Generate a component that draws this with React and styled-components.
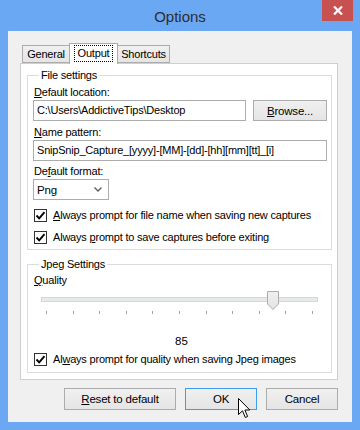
import React from 'react';
import styled, { createGlobalStyle } from 'styled-components';

const Global = createGlobalStyle`
  html, body { margin: 0; padding: 0; background: #6ba8f3; }
  body { font-family: "Liberation Sans", Arial, sans-serif; }
  * { box-sizing: border-box; }
`;

const Window = styled.div`
  position: relative;
  width: 360px;
  height: 430px;
  background: #6ba8f3;
  display: flex;
  flex-direction: column;
  padding: 0 8px 8px;
`;

const TitleBar = styled.div`
  height: 31px;
  margin: 0 -8px;
  display: grid;
  grid-template-columns: 1fr auto 1fr;
  align-items: start;
`;

const Title = styled.div`
  grid-column: 2;
  padding-top: 8px;
  font-size: 15px;
  line-height: 17px;
  color: #2d2d30;
`;

const CloseButton = styled.div`
  grid-column: 3;
  justify-self: end;
  margin-right: 7px;
  width: 31px;
  height: 21px;
  background: #c75050;
  display: flex;
  align-items: center;
  justify-content: center;
`;

const Client = styled.div`
  flex: 1;
  background: #f0f0f0;
  padding: 12px 14px 0 12px;
  display: flex;
  flex-direction: column;
`;

const TabStrip = styled.div`
  display: flex;
  align-items: flex-end;
  height: 20px;
  padding-left: 2px;
  position: relative;
  z-index: 1;
`;

const Tab = styled.div`
  width: ${p => p.$w}px;
  height: ${p => (p.$active ? 21 : 18)}px;
  margin: 0 ${p => (p.$active ? -1 : 0)}px ${p => (p.$active ? -1 : 0)}px;
  border: 1px solid #acacac;
  border-bottom: ${p => (p.$active ? 'none' : '1px solid #acacac')};
  background: ${p => (p.$active ? '#ffffff' : 'linear-gradient(#f0f0f0, #e5e5e5)')};
  font-size: 11px;
  letter-spacing: -0.2px;
  color: #000;
  display: flex;
  align-items: ${p => (p.$active ? 'flex-start' : 'center')};
  justify-content: center;
  padding-top: ${p => (p.$active ? 2 : 0)}px;
  z-index: ${p => (p.$active ? 2 : 1)};
`;

const FocusText = styled.span`
  outline: 1px dotted #000;
  outline-offset: 0;
  padding: 1px 3px;
  line-height: 13px;
`;

const Panel = styled.div`
  height: 317px;
  border: 1px solid #cfcfcf;
  background: #ffffff;
  padding: 4px 5px 0 6px;
  display: flex;
  flex-direction: column;
`;

const Group = styled.fieldset`
  margin: ${p => p.$mt || 0}px 0 0;
  padding: 0 4px ${p => p.$pb}px 5px;
  border: 1px solid #dcdcdc;
  min-width: 0;
  display: flex;
  flex-direction: column;
`;

const Legend = styled.legend`
  margin-left: 6px;
  padding: 0 2px;
  font-size: 11px;
  letter-spacing: -0.2px;
  line-height: 14px;
  color: #000;
`;

const Label = styled.div`
  margin-top: ${p => p.$mt}px;
  font-size: 11px;
  letter-spacing: -0.2px;
  line-height: 14px;
  color: #000;
  padding-left: 1px;
`;

const Key = styled.span`
  text-decoration: underline;
  text-underline-offset: 1px;
`;

const Row = styled.div`
  display: flex;
  gap: 7px;
  margin-top: ${p => p.$mt}px;
`;

const TextBox = styled.div`
  flex: 1;
  height: 21px;
  border: 1px solid #acacac;
  background: #fff;
  font-size: 11px;
  letter-spacing: -0.2px;
  line-height: 19px;
  padding-left: 3px;
  color: #000;
  white-space: nowrap;
  overflow: hidden;
`;

const Button = styled.div`
  width: ${p => p.$w}px;
  height: ${p => p.$h || 22}px;
  border: 1px solid ${p => (p.$default ? '#3c9cf0' : '#acacac')};
  background: linear-gradient(#f0f0f0, #e5e5e5);
  font-size: 11.5px;
  letter-spacing: -0.2px;
  color: #000;
  display: flex;
  align-items: center;
  justify-content: center;
`;

const Select = styled.div`
  width: 76px;
  height: 21px;
  margin-top: ${p => p.$mt}px;
  border: 1px solid #acacac;
  background: #fff;
  display: flex;
  align-items: center;
  justify-content: space-between;
  padding: 0 6px 0 3px;
  font-size: 11.5px;
  letter-spacing: -0.2px;
  color: #000;
`;

const CheckRow = styled.div`
  display: flex;
  align-items: center;
  gap: 6px;
  margin-top: ${p => p.$mt}px;
  padding-left: 1px;
  font-size: 11px;
  letter-spacing: -0.2px;
  line-height: 14px;
  color: #000;
`;

const Box = styled.div`
  width: 13px;
  height: 13px;
  border: 1px solid #333;
  background: #fff;
  display: flex;
  align-items: center;
  justify-content: center;
`;

const SliderBox = styled.div`
  position: relative;
  margin: ${p => p.$mt}px 9px 0 8px;
  height: 24px;
`;

const Track = styled.div`
  margin-top: 6px;
  height: 5px;
  border: 1px solid #d6d6d6;
  background: #e7eaea;
`;

const Ticks = styled.div`
  margin-top: 9px;
  padding: 0 5px;
  display: flex;
  justify-content: space-between;
`;

const Tick = styled.div`
  width: 1px;
  height: 3px;
  background: #a3a3a3;
`;

const Thumb = styled.svg`
  position: absolute;
  top: 0;
`;

const Value = styled.div`
  margin-top: ${p => p.$mt}px;
  text-align: center;
  font-size: 11.5px;
  line-height: 14px;
  color: #000;
  padding-left: 3px;
`;

const ButtonRow = styled.div`
  display: flex;
  justify-content: flex-end;
  gap: 9px;
  margin-top: 8px;
`;

const Cursor = styled.svg`
  position: absolute;
  left: 238px;
  top: 398px;
`;

const Check = ({ children, mt }) => (
  <CheckRow $mt={mt}>
    <Box>
      <svg width="11" height="11" viewBox="0 0 11 11">
        <path d="M1.5 5.5 L4.2 8.3 L9.5 2.2" fill="none" stroke="#000" strokeWidth="1.9" />
      </svg>
    </Box>
    <span>{children}</span>
  </CheckRow>
);

const TRACK_W = 277;
const value = 85;
const thumbLeft = 5 + (value / 100) * (TRACK_W - 10) - 5.5;

export default function App() {
  return (
    <>
      <Global />
      <Window>
        <TitleBar>
          <Title>Options</Title>
          <CloseButton>
            <svg width="10" height="9" viewBox="0 0 10 9">
              <path d="M1 0.5 L9 8.5 M9 0.5 L1 8.5" stroke="#fff" strokeWidth="2.2" />
            </svg>
          </CloseButton>
        </TitleBar>
        <Client>
          <TabStrip>
            <Tab $w={48}>General</Tab>
            <Tab $w={49} $active>
              <FocusText>Output</FocusText>
            </Tab>
            <Tab $w={53}>Shortcuts</Tab>
          </TabStrip>
          <Panel>
            <Group $pb={5}>
              <Legend>File settings</Legend>
              <Label $mt={3}>
                <Key>D</Key>efault location:
              </Label>
              <Row $mt={1}>
                <TextBox>C:\Users\AddictiveTips\Desktop</TextBox>
                <Button $w={74} $h={21}>
                  <span>
                    <Key>B</Key>rowse...
                  </span>
                </Button>
              </Row>
              <Label $mt={4}>
                <Key>N</Key>ame pattern:
              </Label>
              <Row $mt={1}>
                <TextBox>SnipSnip_Capture_[yyyy]-[MM]-[dd]-[hh][mm][tt]_[i]</TextBox>
              </Row>
              <Label $mt={3}>
                De<Key>f</Key>ault format:
              </Label>
              <Select $mt={1}>
                <span>Png</span>
                <svg width="8" height="5" viewBox="0 0 8 5">
                  <path d="M0.5 0.5 L4 4 L7.5 0.5" fill="none" stroke="#606060" strokeWidth="1.4" />
                </svg>
              </Select>
              <Check mt={8}>
                <Key>A</Key>lways prompt for file name when saving new captures
              </Check>
              <Check mt={8}>
                Always <Key>p</Key>rompt to save captures before exiting
              </Check>
            </Group>
            <Group $mt={7} $pb={6}>
              <Legend>Jpeg Settings</Legend>
              <Label $mt={2}>
                <Key>Q</Key>uality
              </Label>
              <SliderBox $mt={4}>
                <Track />
                <Ticks>
                  {Array.from({ length: 11 }, (_, i) => (
                    <Tick key={i} />
                  ))}
                </Ticks>
                <Thumb width="12" height="19" viewBox="0 0 12 19" style={{ left: thumbLeft }}>
                  <defs>
                    <linearGradient id="tg" x1="0" y1="0" x2="0" y2="1">
                      <stop offset="0" stopColor="#f0f0f0" />
                      <stop offset="1" stopColor="#e3e3e3" />
                    </linearGradient>
                  </defs>
                  <path d="M0.5 0.5 H11.5 V13 L6 18.5 L0.5 13 Z" fill="url(#tg)" stroke="#acacac" />
                </Thumb>
              </SliderBox>
              <Value $mt={19}>85</Value>
              <Check mt={4}>
                Al<Key>w</Key>ays prompt for quality when saving Jpeg images
              </Check>
            </Group>
          </Panel>
          <ButtonRow>
            <Button $w={112}>
              <span>
                <Key>R</Key>eset to default
              </span>
            </Button>
            <Button $w={72} $default>
              OK
            </Button>
            <Button $w={72}>Cancel</Button>
          </ButtonRow>
        </Client>
        <Cursor width="13" height="21" viewBox="0 0 13 21">
          <path
            d="M0.5 0.5 V16.5 L4.5 12.8 L7.3 19.5 L9.6 18.5 L6.9 12 H11.8 Z"
            fill="#fff"
            stroke="#000"
            strokeWidth="1"
            strokeLinejoin="round"
          />
        </Cursor>
      </Window>
    </>
  );
}
